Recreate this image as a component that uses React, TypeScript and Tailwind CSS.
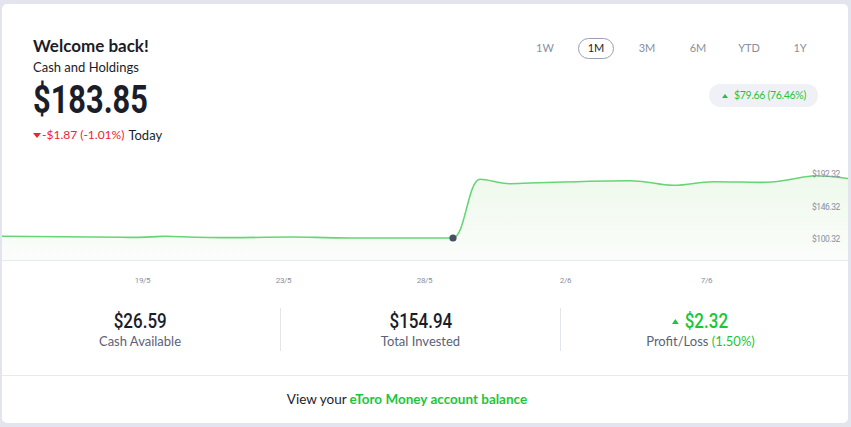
const ranges = ["1W", "1M", "3M", "6M", "YTD", "1Y"];
const dates = ["19/5", "23/5", "28/5", "2/6", "7/6"];

const body = "font-['Lato','Open_Sans',sans-serif]";
const num = "font-['Roboto',sans-serif]";

function Chart() {
  const line =
    "M -2 86.3 C 40 86.3, 80 87, 120 87.3 S 150 86, 165 86.3 S 210 88, 240 87.6 S 270 87, 290 87 S 320 88, 350 88 L 451 88 C 463 88, 466 29.3, 478 29.3 C 488 29.3, 495 33.7, 508 33.7 C 560 32, 600 30.5, 628 30.7 C 650 30.9, 655 35.3, 671 35.3 C 688 35.3, 695 31.7, 711 31.7 C 735 31.7, 745 32.6, 764 32.3 C 785 32, 800 25.7, 814 25.7 C 830 25.7, 840 28, 848 28.7";
  return (
    <svg width="846" height="110" viewBox="0 0 846 110" className="block">
      <defs>
        <linearGradient id="fill" x1="0" y1="25" x2="0" y2="110" gradientUnits="userSpaceOnUse">
          <stop offset="0" stopColor="#eef9ec" />
          <stop offset="1" stopColor="#fbfdfa" />
        </linearGradient>
      </defs>
      <path d={`${line} L 848 110 L -2 110 Z`} fill="url(#fill)" />
      <path d={line} fill="none" stroke="#66d675" strokeWidth="1.6" />
      <circle cx="451" cy="88" r="3.6" fill="#4b4f66" />
      <g fill="#8a8ea0" fontSize="8.5" fontFamily="Roboto, sans-serif" textAnchor="end" letterSpacing="-0.4">
        <text x="838" y="27">$192.32</text>
        <text x="838" y="59.7">$146.32</text>
        <text x="838" y="92.3">$100.32</text>
      </g>
    </svg>
  );
}

function Stat({ value, label, first }: { value: React.ReactNode; label: React.ReactNode; first?: boolean }) {
  return (
    <div className={`flex flex-col items-center h-[43px] pt-[2px] ${first ? "" : "border-l border-[#e3e5ec]"}`}>
      <div className={`${num} inline-block scale-x-[0.85] text-[20px] leading-[22px] font-medium text-[#1b1d29]`}>{value}</div>
      <div className={`${body} text-[13px] leading-[18px] text-[#5b6178]`}>{label}</div>
    </div>
  );
}

export default function App() {
  return (
    <div className="h-[427px] w-[851px] bg-[#e3e5ee] pl-[2px] pt-[4px]">
      <div className="w-[846px] h-[419px] bg-white rounded-[5px] overflow-hidden flex flex-col">
        <div className="h-[146px] flex justify-between pl-[31px] pr-[30px] pt-[32px]">
          <div className={body}>
            <div className="text-[17px] leading-[20px] font-bold text-[#1b1d29]">Welcome back!</div>
            <div className="mt-[2px] text-[13px] leading-[18px] text-[#1b1d29]">Cash and Holdings</div>
            <div className={`${num} mt-[4px] origin-left scale-x-[0.81] text-[38px] leading-[40px] font-bold text-[#1b1d29]`}>$183.85</div>
            <div className="mt-[6px] flex items-center leading-[18px]">
              <span className="w-0 h-0 border-l-[4px] border-r-[4px] border-t-[5px] border-l-transparent border-r-transparent border-t-[#f0222d] mr-[1px]" />
              <span className="text-[12px] text-[#f0222d]">-$1.87 (-1.01%)</span>
              <span className="ml-[4px] text-[13px] text-[#1b1d29]">Today</span>
            </div>
          </div>
          <div className={`${body} flex flex-col items-end`}>
            <div className="mt-[2px] flex gap-[15px]">
              {ranges.map((r) => (
                <div
                  key={r}
                  className={`w-[36px] h-[21px] flex items-center justify-center rounded-full text-[11px] ${
                    r === "1M" ? "border border-[#9a9eae] text-[#1b1d29]" : "text-[#8a8ea0]"
                  }`}
                >
                  {r}
                </div>
              ))}
            </div>
            <div className="mt-[25px] h-[23px] pl-[13px] pr-[12px] rounded-full bg-[#f0f1f6] flex items-center text-[10.5px] tracking-[-0.3px] text-[#1cc63a]">
              <span className="w-0 h-0 border-l-[3px] border-r-[3px] border-b-[4px] border-l-transparent border-r-transparent border-b-[#1cc63a] mr-[6px]" />
              $79.66 (76.46%)
            </div>
          </div>
        </div>

        <Chart />

        <div className="border-t border-[#e8e9ef] h-[41px] flex items-center pl-[70px]">
          {dates.map((d) => (
            <div key={d} className={`${num} w-[141px] text-center text-[8px] tracking-[-0.3px] text-[#8a8ea0]`}>
              {d}
            </div>
          ))}
        </div>

        <div className="h-[74px] pt-[7px]">
          <div className="w-[840px] -ml-[2px] grid grid-cols-3">
            <Stat first value="$26.59" label="Cash Available" />
            <Stat value="$154.94" label="Total Invested" />
            <Stat
              value={
                <span className="flex items-center text-[#1cc63a]">
                  <span className="w-0 h-0 border-l-[4px] border-r-[4px] border-b-[5px] border-l-transparent border-r-transparent border-b-[#1cc63a] mr-[7px]" />
                  $2.32
                </span>
              }
              label={
                <>
                  Profit/Loss <span className="text-[#1cc63a]">(1.50%)</span>
                </>
              }
            />
          </div>
        </div>

        <div className={`${body} border-t border-[#e8e9ef] h-[47px] flex items-center justify-center pr-[36px] text-[13.5px] leading-[18px]`}>
          <span className="text-[#1b1d29]">View your</span>
          <span className="ml-[3px] text-[#1cc63a] font-bold">eToro Money account balance</span>
        </div>
      </div>
    </div>
  );
}
